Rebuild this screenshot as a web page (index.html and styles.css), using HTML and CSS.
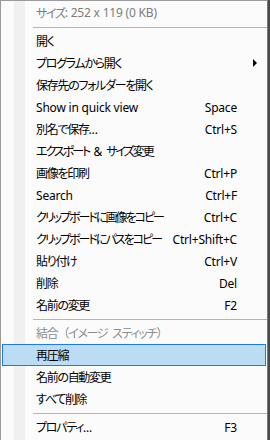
FILE: index.html
```html
<!DOCTYPE html>
<html>
<head>
    <link rel="stylesheet" href="styles.css">
</head>
<body>
    <div class="menu">
        <div class="item header">サイズ<span class="en">: 252 x 119 (0 KB)</span></div>
        <div class="sep"></div>
        <div class="item"><span class="label">開く</span></div>
        <div class="item"><span class="label">プログラムから開く</span><span class="sub"><i class="arrow"></i></span></div>
        <div class="item"><span class="label">保存先のフォルダーを開く</span></div>
        <div class="item"><span class="label en">Show in quick view</span><span class="key">Space</span></div>
        <div class="item"><span class="label">別名で保存<span class="en">...</span></span><span class="key">Ctrl+S</span></div>
        <div class="item"><span class="label kana">エクスポート <span class="en">&amp;</span> サイズ変更</span></div>
        <div class="item"><span class="label">画像を印刷</span><span class="key">Ctrl+P</span></div>
        <div class="item"><span class="label en">Search</span><span class="key">Ctrl+F</span></div>
        <div class="item"><span class="label kana">クリップボードに画像をコピー</span><span class="key">Ctrl+C</span></div>
        <div class="item"><span class="label kana">クリップボードにパスをコピー</span><span class="key">Ctrl+Shift+C</span></div>
        <div class="item"><span class="label">貼り付け</span><span class="key">Ctrl+V</span></div>
        <div class="item"><span class="label">削除</span><span class="key">Del</span></div>
        <div class="item"><span class="label">名前の変更</span><span class="key">F2</span></div>
        <div class="sep"></div>
        <div class="item disabled"><span class="label">結合<span class="paren">（</span>イメージ スティッチ<span class="paren">）</span></span></div>
        <div class="item active"><span class="label">再圧縮</span></div>
        <div class="item"><span class="label">名前の自動変更</span></div>
        <div class="item"><span class="label">すべて削除</span></div>
        <div class="sep"></div>
        <div class="item"><span class="label">プロパティ<span class="en">...</span></span><span class="key">F3</span></div>
    </div>
</body>
</html>
```

FILE: styles.css
```css
html, body {
    margin: 0;
    padding: 0;
    background: #4a4a4a;
    overflow: hidden;
}

.menu {
    width: 266px;
    height: 460px;
    border: 1px solid #9a9a9a;
    border-right-color: #7a7a7a;
    background: linear-gradient(to right, #fbfbfb 13px, #f0f0f0 13px, #f0f0f0 24px, #fbfbfb 24px);
    font-family: "Noto Sans", "Noto Sans CJK JP", sans-serif;
    font-size: 12px;
    font-feature-settings: "palt";
    letter-spacing: -1.3px;
    word-spacing: 3px;
    color: #000;
}

.en,
.key {
    letter-spacing: -0.2px;
    word-spacing: 0;
}

.kana {
    letter-spacing: -2px;
}

.paren {
    font-feature-settings: normal;
}

.item {
    display: flex;
    align-items: center;
    height: 22px;
    padding-left: 35px;
    padding-right: 30px;
    white-space: nowrap;
}

.item .label {
    flex: 1;
}

.header {
    height: 23px;
    color: #7d7d7d;
}

.disabled {
    color: #8c8c8c;
}

.active {
    margin: 0 1px;
    padding-left: 34px;
    background: #bcdcf4;
    box-shadow: inset 0 0 0 1px #1b7fd8;
}

.sub {
    width: 30px;
    margin-right: -30px;
    display: flex;
}

.arrow {
    display: block;
    margin-left: 16px;
    width: 0;
    height: 0;
    border-top: 4px solid transparent;
    border-bottom: 4px solid transparent;
    border-left: 4px solid #000;
}

.sep {
    height: 1px;
    margin: 3px 0 2px 32px;
    background: #b4b4b4;
}
```
